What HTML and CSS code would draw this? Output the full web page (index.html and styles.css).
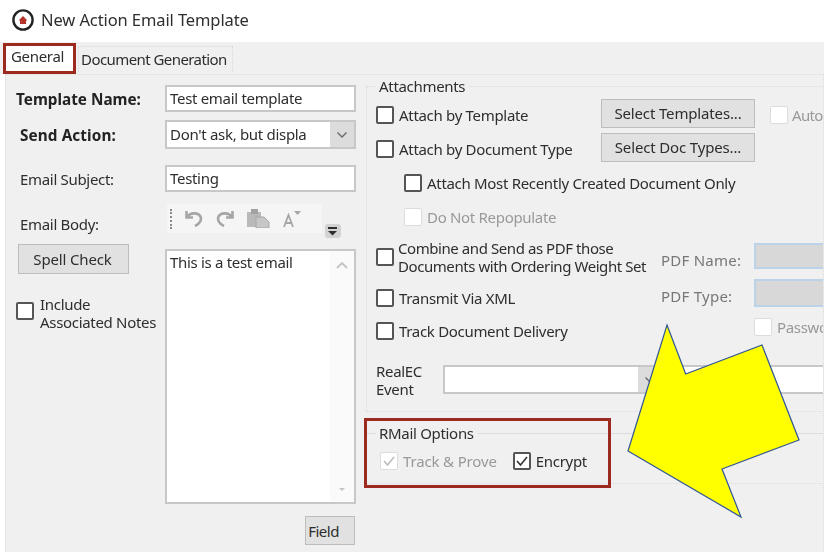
FILE: index.html
```html
<!DOCTYPE html>
<html lang="en">
<head>
    <meta charset="UTF-8">
    <title>New Action Email Template</title>
    <link rel="stylesheet" href="styles.css">
</head>
<body>
<div class="page">
    <div class="titlebar">
        <svg class="appicon" width="22" height="22" viewBox="0 0 22 22">
            <circle cx="11" cy="11" r="9.6" fill="#fff" stroke="#222" stroke-width="2.4"/>
            <path d="M6.500 11.500 L11 7 L15.500 11.500 L14 11.500 V15 H8 V11.500 Z" fill="#b5352c"/>
        </svg>
        <span>New Action Email Template</span>
    </div>

    <div class="tabs">
        <div class="tab active">General</div>
        <div class="tab">Document Generation</div>
    </div>

    <div class="panel">
        <div class="left">
            <div class="frow r1">
                <label class="bold first">Template Name:</label>
                <div class="input">Test email template</div>
            </div>
            <div class="frow r2">
                <label class="bold">Send Action:</label>
                <div class="combo">
                    <span class="combotext">Don't ask, but displa</span>
                    <span class="arrow"><svg width="12" height="8" viewBox="0 0 12 8"><path d="M1.500 1.500 L6 6 L10.500 1.500" fill="none" stroke="#666" stroke-width="1.300"/></svg></span>
                </div>
            </div>
            <div class="frow r3">
                <label>Email Subject:</label>
                <div class="input">Testing</div>
            </div>
            <div class="frow r4">
                <label>Email Body:</label>
                <div class="toolbar">
                    <span class="grip"></span>
                    <svg width="18" height="17" viewBox="0 0 18 17"><path d="M1.500 1 V7.500 H8 M2 7 C5 2.500 13 2 15.500 6.500 C17 10 14.500 14 10 16" fill="none" stroke="#a6a6a6" stroke-width="2.600"/></svg>
                    <svg width="18" height="17" viewBox="0 0 18 17"><path d="M16.500 1 V7.500 H10 M16 7 C13 2.500 5 2 2.500 6.500 C1 10 3.500 14 8 16" fill="none" stroke="#a6a6a6" stroke-width="2.600"/></svg>
                    <svg width="23" height="19" viewBox="0 0 23 19"><rect x="0" y="3" width="14" height="15" fill="#b9b9b9"/><rect x="4" y="0" width="7" height="5" fill="#a2a2a2"/><path d="M9 8 H17 L22 13 V19 H9 Z" fill="#c6c6c6" stroke="#a8a8a8"/></svg>
                    <svg width="18" height="18" viewBox="0 0 18 18"><path d="M1 17 L5.500 5 L10 17 M3 13 H8" fill="none" stroke="#a6a6a6" stroke-width="1.800"/><path d="M11 1 H18 L14.500 5 z" fill="#a6a6a6"/></svg>
                    <svg class="more" width="16" height="14" viewBox="0 0 16 14"><rect x="0" y="0" width="16" height="14" rx="3" fill="#d2d2d2"/><rect x="3" y="3" width="9" height="2" fill="#2e2e2e"/><path d="M3 7 H12 L7.500 11.500 z" fill="#2e2e2e"/></svg>
                </div>
            </div>

            <div class="bodyrow">
                <div class="bodyside">
                    <div class="btn spell">Spell Check</div>
                    <div class="check-row notes">
                        <span class="check"></span>
                        <span class="lines">Include<br>Associated Notes</span>
                    </div>
                </div>
                <div class="bodytext">
                    <div class="message">This is a test email</div>
                    <div class="scroll">
                        <svg width="14" height="9" viewBox="0 0 14 9"><path d="M2 7 L7 2 L12 7" fill="none" stroke="#c4c4c4" stroke-width="1.800"/></svg>
                        <svg width="8" height="5" viewBox="0 0 8 5"><path d="M1 1 H7 L4 4 z" fill="#c4c4c4"/></svg>
                    </div>
                </div>
            </div>
            <div class="fieldrow"><div class="btn field">Field</div></div>
        </div>

        <div class="right">
            <fieldset class="attachments">
                <legend>Attachments</legend>
                <div class="row">
                    <span class="check"></span><span class="name">Attach by Template</span>
                    <div class="btn select">Select Templates...</div>
                    <span class="check off auto"></span><span class="muted autotext">Auto</span>
                </div>
                <div class="row">
                    <span class="check"></span><span class="name">Attach by Document Type</span>
                    <div class="btn select">Select Doc Types...</div>
                </div>
                <div class="row sub">
                    <span class="check"></span><span>Attach Most Recently Created Document Only</span>
                </div>
                <div class="row sub">
                    <span class="check off"></span><span class="muted">Do Not Repopulate</span>
                </div>

                <div class="split">
                    <div class="split-left">
                        <div class="check-row combine">
                            <span class="check"></span>
                            <span class="lines">Combine and Send as PDF those<br>Documents with Ordering Weight Set</span>
                        </div>
                        <div class="check-row transmit"><span class="check"></span><span>Transmit Via XML</span></div>
                        <div class="check-row track"><span class="check"></span><span>Track Document Delivery</span></div>
                    </div>
                    <div class="split-right">
                        <div class="pdf name-row"><span class="pdflabel">PDF Name:</span><span class="pdfinput"></span></div>
                        <div class="pdf type-row"><span class="pdflabel">PDF Type:</span><span class="pdfinput tall"></span></div>
                        <div class="pass-row"><span class="check off"></span><span class="muted">Password</span></div>
                    </div>
                </div>

                <div class="realec">
                    <span class="lines eventlabel">RealEC<br>Event</span>
                    <div class="combo wide">
                        <span class="combotext"></span>
                        <span class="arrow"><svg width="12" height="8" viewBox="0 0 12 8"><path d="M1.500 1.500 L6 6 L10.500 1.500" fill="none" stroke="#666" stroke-width="1.300"/></svg></span>
                        <span class="combotext rest"></span>
                    </div>
                </div>
            </fieldset>

            <fieldset class="rmail">
                <legend>RMail Options</legend>
                <div class="rmail-row">
                    <span class="check off">
                        <svg width="14" height="14" viewBox="0 0 14 14"><path d="M2 7 L5.500 11 L12 3" fill="none" stroke="#bdbdbd" stroke-width="1.600"/></svg>
                    </span>
                    <span class="muted prove">Track &amp; Prove</span>
                    <span class="check encrypt">
                        <svg width="14" height="14" viewBox="0 0 14 14"><path d="M2 7 L5.500 11 L12 3" fill="none" stroke="#333" stroke-width="1.600"/></svg>
                    </span>
                    <span>Encrypt</span>
                </div>
            </fieldset>
        </div>
    </div>

    <!-- annotations on top of the screenshot -->
    <div class="mark mark-tab"></div>
    <div class="mark mark-rmail"></div>
    <svg class="bigarrow" width="824" height="552" viewBox="0 0 824 552">
        <path d="M667 325 L685.700 374 L762 345 L799 440 L722 469 L741 517 L628 451 Z" fill="#ffff00" stroke="#2f5597" stroke-width="1.200"/>
    </svg>
</div>
</body>
</html>
```

FILE: styles.css
```css
* {
    margin: 0;
    padding: 0;
    box-sizing: border-box;
}

html, body {
    width: 824px;
    height: 552px;
    overflow: hidden;
    background-color: #fff;
}

.page {
    position: relative;
    width: 824px;
    height: 552px;
    overflow: hidden;
    font-family: "Noto Sans", "Open Sans", sans-serif;
    font-size: 15px;
    letter-spacing: -0.31px;
    line-height: 18px;
    color: #2e2e2e;
    filter: blur(0.5px);
}

/* title */
.titlebar {
    height: 42px;
    display: flex;
    align-items: center;
    gap: 7px;
    padding: 0 0 2px 12px;
    font-size: 16.5px;
    letter-spacing: -0.1px;
}

.appicon {
    flex: none;
}

/* tabs */
.tabs {
    height: 32px;
    display: flex;
    align-items: flex-start;
    padding-left: 4px;
    background-color: #f0f0f0;
}

.tab {
    height: 26px;
    margin-top: 4px;
    padding: 3px 5px 0 2px;
    border: 1px dotted #d8d8d8;
    border-bottom: 0;
    letter-spacing: -0.57px;
}

.tab.active {
    width: 71px;
    height: 30px;
    margin-top: 2px;
    margin-right: 3px;
    padding: 3px 0 0 7px;
    border: 0;
    background-color: #fff;
    letter-spacing: -0.31px;
}

/* main */
.panel {
    height: 482px;
    display: flex;
    margin-left: 5px;
    border: 1px dotted #dcdcdc;
    background-color: #f0f0f0;
}

.left {
    width: 360px;
    flex: none;
    padding: 10px 0 0 10px;
}

.frow {
    display: flex;
    align-items: center;
}

.r1 { height: 27px; margin-bottom: 8px; }
.r2 { height: 29px; margin-bottom: 16px; }
.r3 { height: 27px; margin-bottom: 12px; }
.r4 { height: 36px; align-items: flex-start; }

.frow label {
    width: 149px;
    flex: none;
    padding-left: 4px;
}

.frow .bold {
    font-size: 15.3px;
    font-weight: bold;
    letter-spacing: 0.1px;
    color: #222;
}

.frow .first {
    padding-left: 0;
    letter-spacing: 0;
}

.r4 label {
    margin-top: 11px;
}

.input {
    width: 191px;
    height: 27px;
    padding: 2px 0 0 3px;
    border: 2px solid #c8c8c8;
    background-color: #fff;
}

.combo {
    display: flex;
    width: 191px;
    height: 29px;
    border: 2px solid #c8c8c8;
    background-color: #fff;
}

.combotext {
    flex: 1;
    padding: 3px 0 0 3px;
    white-space: nowrap;
    overflow: hidden;
}

.arrow {
    width: 24px;
    flex: none;
    display: flex;
    align-items: center;
    justify-content: center;
    background-color: #dcdcdc;
}

.toolbar {
    display: flex;
    align-items: center;
    width: 155px;
    height: 29px;
    margin-left: 2px;
    padding: 0 0 0 3px;
    gap: 13px;
    background-color: #f5f5f5;
}

.toolbar svg {
    flex: none;
}

.grip {
    width: 2px;
    height: 20px;
    flex: none;
    border-left: 2px dotted #8a8a8a;
}

.toolbar .more {
    align-self: flex-start;
    margin: 20px 0 0 11px;
}

.btn {
    display: flex;
    align-items: center;
    justify-content: center;
    border: 1px solid #bdbdbd;
    background-color: #e1e1e1;
}

.bodyrow {
    display: flex;
    margin-top: 9px;
}

.bodyside {
    width: 149px;
    flex: none;
}

.spell {
    width: 111px;
    height: 30px;
    margin-left: 2px;
    margin-top: -5px;
    padding-right: 2px;
    letter-spacing: -0.15px;
}

.check-row {
    display: flex;
    align-items: center;
    gap: 5px;
}

.notes {
    margin-top: 21px;
    align-items: flex-start;
    gap: 6px;
}

.notes .check {
    margin-top: 7px;
}

.lines {
    display: block;
}

.check {
    width: 18px;
    height: 18px;
    flex: none;
    display: inline-flex;
    align-items: center;
    justify-content: center;
    border: 2px solid #555;
    border-radius: 2px;
    background-color: #fff;
}

.check.off {
    border: 1px solid #dcdcdc;
}

.bodytext {
    width: 191px;
    height: 255px;
    display: flex;
    border: 2px solid #c8c8c8;
    background-color: #fff;
}

.message {
    flex: 1;
    padding: 2px 0 0 3px;
}

.scroll {
    width: 24px;
    display: flex;
    flex-direction: column;
    align-items: center;
    justify-content: space-between;
    padding: 10px 0;
    background-color: #fafafa;
}

.fieldrow {
    display: flex;
    justify-content: flex-end;
    width: 339px;
    margin-top: 12px;
}

.field {
    width: 50px;
    height: 29px;
    padding-right: 13px;
    letter-spacing: -0.5px;
}

/* right side */
.right {
    flex: 1;
    min-width: 0;
    overflow: hidden;
}

fieldset {
    width: 480px;
    border: 1px solid #dcdcdc;
}

legend {
    padding: 0 3px;
}

.attachments {
    height: 335px;
    margin-top: 2px;
    padding: 0 0 0 9px;
    border-style: dotted none dotted dotted;
}

.row {
    height: 32px;
    margin-bottom: 2px;
    display: flex;
    align-items: center;
    gap: 5px;
}

.attachments .row:first-of-type {
    margin-top: 4px;
}

.row.sub {
    padding-left: 28px;
}

.row .name {
    width: 197px;
}

.select {
    width: 154px;
    height: 29px;
    align-self: flex-start;
    padding-bottom: 2px;
    letter-spacing: -0.15px;
}

.auto {
    margin-left: 10px;
}

.muted {
    color: #999;
}

.autotext {
    margin-left: -1px;
    letter-spacing: -0.7px;
}

.prove {
    letter-spacing: -0.15px;
}

.split {
    display: flex;
    margin-top: 6px;
}

.split-left {
    width: 284px;
    flex: none;
}

.combine {
    height: 36px;
    gap: 4px;
    letter-spacing: -0.43px;
}

.transmit {
    margin-top: 14px;
}

.track {
    margin-top: 15px;
}

.pdf {
    display: flex;
    align-items: flex-start;
}

.name-row {
    margin-top: 4px;
}

.pdflabel {
    width: 94px;
    flex: none;
    padding: 8px 0 0 1px;
    letter-spacing: 0.25px;
    color: #777;
}

.pdfinput {
    width: 120px;
    height: 26px;
    flex: none;
    border: 2px solid #bcd2e8;
    background-color: #d8d8d8;
}

.pdfinput.tall {
    height: 28px;
}

.type-row {
    margin-top: 10px;
}

.pass-row {
    display: flex;
    align-items: center;
    gap: 5px;
    margin-top: 11px;
    padding-left: 94px;
}

.realec {
    display: flex;
    align-items: flex-start;
    margin-top: 22px;
}

.eventlabel {
    width: 67px;
    flex: none;
}

.wide {
    width: 420px;
    flex: none;
    margin-top: 3px;
}

.wide .combotext {
    flex: none;
    width: 193px;
}

.wide .combotext.rest {
    width: 200px;
}

.rmail {
    height: 60px;
    margin-top: 12px;
    padding: 0 0 0 9px;
    border-style: solid none dotted solid;
}

.rmail-row {
    display: flex;
    align-items: center;
    gap: 5px;
    margin: 10px 0 0 4px;
}

.encrypt {
    margin-left: 11px;
}

/* annotations */
.mark {
    position: absolute;
    border: 3px solid #9c2a1f;
}

.mark-tab {
    left: 3px;
    top: 43px;
    width: 73px;
    height: 31px;
}

.mark-rmail {
    left: 364px;
    top: 418px;
    width: 247px;
    height: 70px;
}

.bigarrow {
    position: absolute;
    left: 0;
    top: 0;
}
```
